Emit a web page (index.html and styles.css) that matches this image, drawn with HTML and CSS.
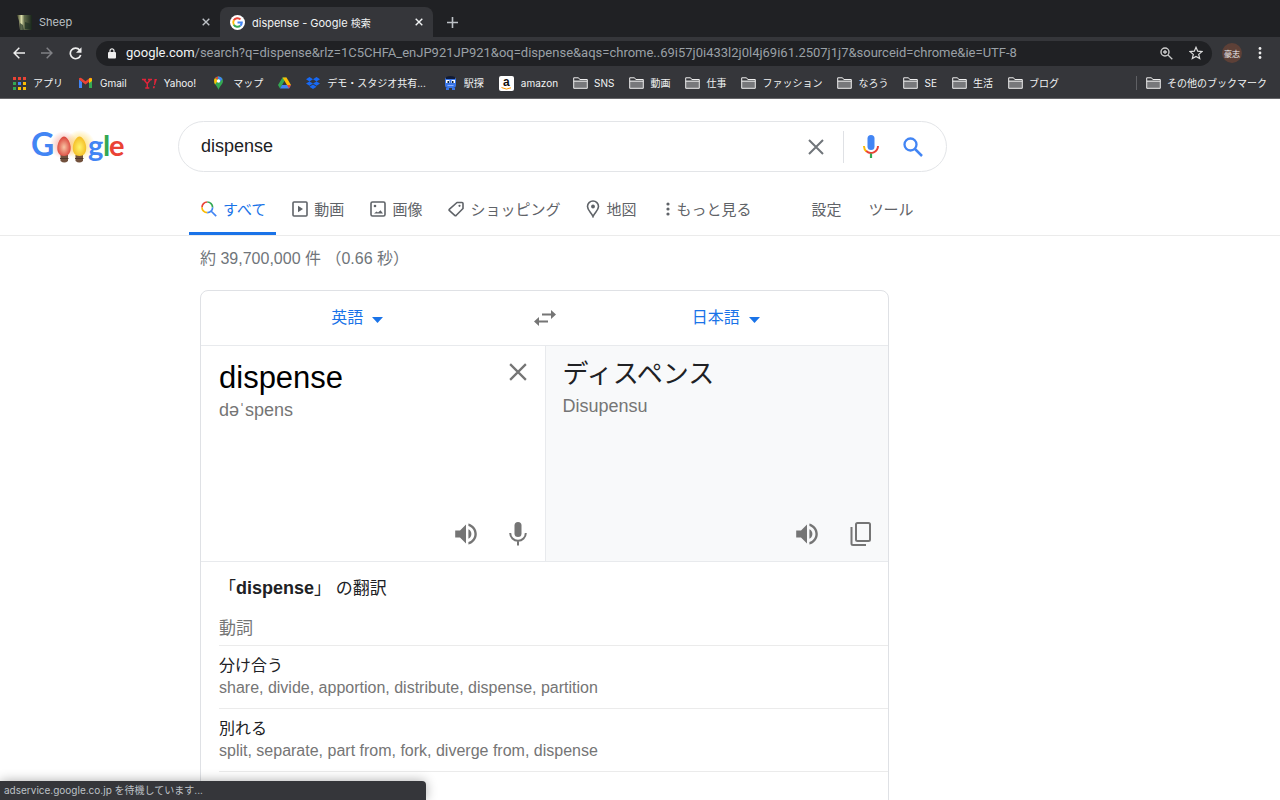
FILE: index.html
```html
<!DOCTYPE html>
<html lang="ja">
<head>
<meta charset="utf-8">
<title>dispense - Google 検索</title>
<link rel="stylesheet" href="styles.css">
</head>
<body>
<svg class="defs" aria-hidden="true">
  <symbol id="folder" viewBox="0 0 15 12"><path d="M1 3.5h13v7.8H1z" fill="#77787b"/><path d="M.7 11.3V.8h4.8l1.3 1.7h7.5v8.8zM.7 4.2h13.6" fill="none" stroke="#eee" stroke-width="1"/></symbol>
  <symbol id="cross" viewBox="0 0 16 16"><path d="M1 1l14 14M15 1L1 15" fill="none" stroke="currentColor" stroke-width="2"/></symbol>
  <symbol id="tabcross" viewBox="0 0 8 8"><path d="M.7.7l6.6 6.6M7.3.7L.7 7.3" fill="none" stroke="currentColor" stroke-width="1.4"/></symbol>
  <symbol id="speaker" viewBox="2 2 20 20"><path fill="currentColor" d="M3 9v6h4l5 5V4L7 9H3zm13.5 3A4.5 4.500 0 0 0 14 7.970v8.050c1.480-.730 2.500-2.250 2.500-4.020zM14 3.230v2.060c2.890.860 5 3.540 5 6.710s-2.110 5.850-5 6.710v2.060c4.010-.910 7-4.490 7-8.770s-2.990-7.860-7-8.770z"/></symbol>
  <symbol id="caret" viewBox="0 0 11 6"><path d="M0 0h11L5.500 6z" fill="currentColor"/></symbol>
</svg>

<header class="browser">
  <div class="tabs">
    <div class="tab">
      <svg width="15" height="15" viewBox="0 0 15 15"><defs><linearGradient id="sheep"><stop offset="0" stop-color="#35391f"/><stop offset=".3" stop-color="#d9dca8"/><stop offset=".5" stop-color="#5f6a4a"/><stop offset="1" stop-color="#18241a"/></linearGradient></defs><path fill="url(#sheep)" d="M0 0h15v15H3L2 6z"/><path d="M3 8l3 2 1 5H3zM8 7l6 2v5H8z" fill="#203024" opacity=".7"/></svg>
      <span class="tab-title">Sheep</span>
      <button class="tab-close" aria-label="タブを閉じる"><svg width="8" height="8"><use href="#tabcross"/></svg></button>
    </div>
    <div class="tab tab-active">
      <svg width="15" height="15" viewBox="0 0 15 15"><circle cx="7.500" cy="7.500" r="7.500" fill="#fff"/><g fill="none" stroke-width="2"><path d="M3.800 5.300a4.300 4.300 0 0 1 6.700-.900" stroke="#ea4335"/><path d="M3.800 9.700a4.300 4.300 0 0 1 0-4.400" stroke="#fbbc05"/><path d="M10.300 10.800a4.300 4.300 0 0 1-6.500-1.100" stroke="#34a853"/><path d="M7.500 7.600h4.300q0 2-1.500 3.200" stroke="#4285f4"/></g></svg>
      <span class="tab-title">dispense - Google <small>検索</small></span>
      <button class="tab-close" aria-label="タブを閉じる"><svg width="8" height="8"><use href="#tabcross"/></svg></button>
    </div>
    <button class="new-tab" aria-label="新しいタブ"><svg width="11" height="11" viewBox="0 0 11 11"><path d="M5.500 0v11M0 5.500h11" stroke="currentColor" stroke-width="1.600"/></svg></button>
  </div>
  <div class="toolbar">
    <button class="tool" aria-label="戻る"><svg width="12" height="12" viewBox="0 0 12 12"><path d="M12 6H1.200M6.300.8L1.100 6l5.200 5.200" fill="none" stroke="#eee" stroke-width="1.500"/></svg></button>
    <button class="tool" aria-label="進む"><svg width="12" height="12" viewBox="0 0 12 12"><path d="M0 6h10.800M5.700.8L10.900 6l-5.200 5.200" fill="none" stroke="#808185" stroke-width="1.500"/></svg></button>
    <button class="tool" aria-label="再読み込み"><svg width="13" height="13" viewBox="0 0 13 13"><path d="M10.700 3A5.300 5.300 0 1 0 11.700 8" fill="none" stroke="#eee" stroke-width="1.700"/><path d="M12.500.3v5.500H7z" fill="#eee"/></svg></button>
    <div class="omnibox">
      <svg width="8" height="11" viewBox="0 0 8 11"><rect y="4" width="8" height="6.500" rx="1" fill="#eee"/><path d="M2 5V2.800a2 2 0 0 1 4 0V5" fill="none" stroke="#eee" stroke-width="1.200"/></svg>
      <div class="url" role="textbox" aria-label="アドレスと検索バー"><b>google.com</b>/search?q=dispense&amp;rlz=1C5CHFA_enJP921JP921&amp;oq=dispense&amp;aqs=chrome..69i57j0i433l2j0l4j69i61.2507j1j7&amp;sourceid=chrome&amp;ie=UTF-8</div>
      <button class="plain" aria-label="ズーム"><svg width="13" height="13" viewBox="0 0 13 13"><circle cx="5" cy="5" r="4" fill="none" stroke="#ccc" stroke-width="1.400"/><path d="M8 8l4.300 4.300M5 3v4M3 5h4" stroke="#ccc" stroke-width="1.300"/></svg></button>
      <button class="plain" aria-label="ブックマークに追加"><svg width="14" height="14" viewBox="0 0 14 14"><path d="M7 1.300l1.700 3.900 4.200.4-3.200 2.800 1 4.200L7 10.400l-3.700 2.200 1-4.200-3.200-2.800 4.200-.4z" fill="none" stroke="#ddd" stroke-width="1.200"/></svg></button>
    </div>
    <button class="avatar" aria-label="プロフィール">豪志</button>
    <button class="plain" aria-label="メニュー"><svg width="4" height="12" viewBox="0 0 4 12"><g fill="#eee"><circle cx="2" cy="1.500" r="1.400"/><circle cx="2" cy="6" r="1.400"/><circle cx="2" cy="10.500" r="1.400"/></g></svg></button>
  </div>
  <nav class="bookmarks" aria-label="ブックマーク">
    <a href="#"><svg width="13" height="13" viewBox="0 0 13 13"><path d="M0 0h3v3H0zM5 0h3v3H5zM10 0h3v3h-3z" fill="#ea4335"/><path d="M0 5h3v3H0zM0 10h3v3H0z" fill="#34a853"/><path d="M5 5h3v3H5z" fill="#4285f4"/><path d="M10 5h3v3h-3zM10 10h3v3h-3zM5 10h3v3H5z" fill="#fbbc05"/></svg><span lang="ja">アプリ</span></a>
    <a href="#"><svg width="15" height="12" viewBox="0 0 15 12"><path d="M1 2v9h3V5z" fill="#4285f4"/><path d="M14 2v9h-3V5z" fill="#34a853"/><path d="M1 2.500l6.500 5 6.500-5V1.200q-1.500-1-3 .3L7.500 4.200 4 1.500Q2.500.2 1 1.200z" fill="#ea4335"/><path d="M11 1.500q2-1.200 3 .2V4l-3 2.300z" fill="#fbbc05"/></svg><span>Gmail</span></a>
    <a href="#"><svg width="15" height="11" viewBox="0 0 15 11"><path d="M0 1.500h4M6 1.500h4M1.800 1.500l3.400 4.200L8.500 1.500M5.300 5.500V9.800M3.300 10h4" fill="none" stroke="#e0243a" stroke-width="1.400"/><path d="M12.500 1H15l-2 6h-1zM11.200 8.300h1.700l-.4 1.900h-1.700z" fill="#e0243a"/></svg><span>Yahoo!</span></a>
    <a href="#"><svg width="15" height="14" viewBox="0 0 15 14"><path d="M7.500 14C6.500 10 3 8.500 3 5a4.500 4.500 0 0 1 9 0c0 3.500-3.500 5-4.500 9z" fill="#34a853"/><path d="M3.300 6.500A4.500 4.500 0 0 1 4 2l3 2.500-3 4z" fill="#fbbc05"/><path d="M4 2a4.500 4.500 0 0 1 3.500-1.500l-1 3z" fill="#ea4335"/><path d="M7 .5A4.500 4.500 0 0 1 11.500 3L8 7z" fill="#4285f4"/><circle cx="7.500" cy="5" r="1.700" fill="#fff"/></svg><span lang="ja">マップ</span></a>
    <a href="#" aria-label="ドライブ"><svg width="13" height="12" viewBox="0 0 13 12"><path d="M4.500.5h4L4 8l-2 3.500L0 8z" fill="#34a853"/><path d="M4.500.5h4L13 8H9z" fill="#fbbc05"/><path d="M4 8h9l-2 3.500H2z" fill="#4285f4"/><path d="M9 8h4l-2 3.500z" fill="#ea4335"/></svg></a>
    <a href="#"><svg width="14" height="12" viewBox="0 0 14 12"><path d="M3.500 0L7 2.200 3.500 4.400 0 2.200zM10.500 0L14 2.200l-3.500 2.200L7 2.200zM3.500 4.400L7 6.600 3.500 8.800 0 6.600zM10.500 4.400L14 6.600l-3.500 2.200L7 6.600zM7 7.500l3.500 2.200L7 12 3.500 9.700z" fill="#1769f5"/></svg><span lang="ja">デモ・スタジオ共有...</span></a>
    <a href="#" class="eki"><svg width="13" height="14" viewBox="0 0 13 14"><rect x="1" y="1" width="11" height="11" rx="3" fill="#3975e8"/><path d="M2 1Q6.500-1 11 1v2H2z" fill="#111b35"/><path d="M2 4h3.500v3H2zM7.500 4H11v3H7.500z" fill="#fff"/><path d="M3.500 5H5v2H3.500zM8 5h1.500v2H8z" fill="#123"/><path d="M3.500 9.500h6" stroke="#8fb4ff"/><path d="M2 13h3M8 13h3" stroke="#3975e8" stroke-width="2"/></svg><span lang="ja">駅探</span></a>
    <a href="#"><svg class="badge" width="15" height="15" viewBox="0 0 15 15"><rect width="15" height="15" rx="2" fill="#fff"/><text class="mark" x="4" y="10" font-size="12" fill="#111">a</text><path d="M2.500 11.500q5 3 9.500.3" fill="none" stroke="#f90"/></svg><span>amazon</span></a>
    <a class="dir" href="#"><svg width="15" height="12"><use href="#folder"/></svg><span>SNS</span></a>
    <a class="dir" href="#"><svg width="15" height="12"><use href="#folder"/></svg><span lang="ja">動画</span></a>
    <a class="dir" href="#"><svg width="15" height="12"><use href="#folder"/></svg><span lang="ja">仕事</span></a>
    <a class="dir" href="#"><svg width="15" height="12"><use href="#folder"/></svg><span lang="ja">ファッション</span></a>
    <a class="dir" href="#"><svg width="15" height="12"><use href="#folder"/></svg><span lang="ja">なろう</span></a>
    <a class="dir" href="#"><svg width="15" height="12"><use href="#folder"/></svg><span>SE</span></a>
    <a class="dir" href="#"><svg width="15" height="12"><use href="#folder"/></svg><span lang="ja">生活</span></a>
    <a class="dir" href="#"><svg width="15" height="12"><use href="#folder"/></svg><span lang="ja">ブログ</span></a>
    <a class="dir others" href="#"><svg width="15" height="12"><use href="#folder"/></svg><span lang="ja">その他のブックマーク</span></a>
  </nav>
</header>

<div class="page">
  <div class="searchrow">
    <a class="logo" href="#" aria-label="Google">
      <svg width="104" height="46" viewBox="0 0 104 46">
        <defs>
          <radialGradient id="glowR"><stop offset=".3" stop-color="#f0806f" stop-opacity=".5"/><stop offset="1" stop-color="#f0806f" stop-opacity="0"/></radialGradient>
          <radialGradient id="glowY"><stop offset=".3" stop-color="#ffd23c" stop-opacity=".6"/><stop offset="1" stop-color="#ffd23c" stop-opacity="0"/></radialGradient>
          <radialGradient id="bulbR" cy=".55"><stop offset="0" stop-color="#f8c6a4"/><stop offset="1" stop-color="#dc4b41"/></radialGradient>
          <radialGradient id="bulbY" cy=".55"><stop offset="0" stop-color="#fff36a"/><stop offset="1" stop-color="#f4bf28"/></radialGradient>
        </defs>
        <text class="letter" x="3" y="32" font-size="32" fill="#4285f4">G</text>
        <circle cx="36" cy="21" r="14" fill="url(#glowR)"/><circle cx="52" cy="21" r="15" fill="url(#glowY)"/>
        <path d="M32.500 31h7.500v6q-3.700 3-7.500 0zM47.500 31h7.500v6q-3.700 3-7.500 0z" fill="#71503c"/>
        <path d="M32 34.500h8.500M47 34.500h8.500" stroke="#4e382c"/>
        <path d="M36 12.500c3 0 6.700 6 6.700 11.500 0 4.500-2.200 8-6.700 8s-6.700-3.500-6.700-8c0-5.500 3.700-11.500 6.700-11.500z" fill="url(#bulbR)"/>
        <path d="M51.500 12.500c3 0 6.700 6 6.700 11.500 0 4.500-2.200 8-6.700 8s-6.700-3.500-6.700-8c0-5.500 3.700-11.500 6.700-11.500z" fill="url(#bulbY)"/>
        <text class="letter" x="60" y="32" font-size="29" fill="#4285f4">g</text>
        <text class="letter" x="75" y="32" font-size="29" fill="#34a853">l</text>
        <text class="letter" x="81" y="32" font-size="29" fill="#ea4335">e</text>
      </svg>
    </a>
    <form class="searchbox">
      <input type="text" value="dispense" aria-label="検索">
      <button type="button" class="plain clear" aria-label="クリア"><svg width="16" height="16"><use href="#cross"/></svg></button>
      <button type="button" class="plain" aria-label="音声で検索"><svg width="16" height="24" viewBox="0 0 16 24"><rect x="4.500" y="0" width="7" height="15" rx="3.500" fill="#4285f4"/><path d="M1 11a7 7 0 0 0 2.500 5.500" fill="none" stroke="#fbbc05" stroke-width="2"/><path d="M3.200 16A7 7 0 0 0 15 11" fill="none" stroke="#ea4335" stroke-width="2"/><path d="M8 18.500V23" stroke="#34a853" stroke-width="2.200"/></svg></button>
      <button type="button" class="plain" aria-label="Google 検索"><svg width="20" height="20" viewBox="0 0 20 20"><circle cx="7.500" cy="7.500" r="6" fill="none" stroke="#4285f4" stroke-width="2.300"/><path d="M12 12l7 7" stroke="#4285f4" stroke-width="2.500"/></svg></button>
    </form>
  </div>
  <nav class="modes" aria-label="検索の種類">
    <a class="current" href="#"><svg width="16" height="16" viewBox="0 0 16 16"><g fill="none" stroke-width="1.700"><path d="M1 6.500A5.300 5.300 0 0 1 6.300 1" stroke="#ea4335"/><path d="M6.300 11.700A5.300 5.300 0 0 1 1 6.400" stroke="#fbbc05"/><path d="M6.300 1a5.300 5.300 0 0 1 5.300 5.400" stroke="#34a853"/><path d="M11.600 6.400a5.300 5.300 0 0 1-5.300 5.300M10 10l5.200 5.200" stroke="#4285f4"/></g></svg>すべて</a>
    <a href="#"><svg width="16" height="16" viewBox="0 0 16 16"><rect x="1" y="1" width="14" height="14" rx="1" fill="none" stroke="currentColor" stroke-width="1.600"/><path d="M6 4.800v6.400L11 8z" fill="currentColor"/></svg>動画</a>
    <a href="#"><svg width="16" height="16" viewBox="0 0 16 16"><rect x="1" y="1" width="14" height="14" rx="1.500" fill="none" stroke="currentColor" stroke-width="1.600"/><circle cx="5" cy="5" r="1.300" fill="currentColor"/><path d="M4 12.500l2.500-2 1.500 1 2.500-2.300 2.500 3.300z" fill="currentColor"/></svg>画像</a>
    <a href="#"><svg width="16" height="16" viewBox="0 0 16 16"><path d="M9 1.500h5q1 0 1 1v5L8.300 14.300q-.8.700-1.600 0L1.500 9.700q-.8-.8 0-1.600z" fill="none" stroke="currentColor" stroke-width="1.600" stroke-linejoin="round"/><circle cx="11.500" cy="4.800" r="1.100" fill="currentColor"/></svg>ショッピング</a>
    <a href="#"><svg width="14" height="18" viewBox="0 0 14 18"><path d="M7 16.500C5.500 12.500 1.500 10.500 1.500 6.500a5.500 5.500 0 0 1 11 0C12.500 10.500 8.500 12.500 7 16.500z" fill="none" stroke="currentColor" stroke-width="1.600"/><circle cx="7" cy="6.500" r="1.900" fill="currentColor"/></svg>地図</a>
    <a class="more" href="#"><svg width="4" height="14" viewBox="0 0 4 14"><g fill="currentColor"><circle cx="2" cy="2" r="1.600"/><circle cx="2" cy="7" r="1.600"/><circle cx="2" cy="12" r="1.600"/></g></svg>もっと見る</a>
    <div class="settings"><a href="#">設定</a><a href="#">ツール</a></div>
  </nav>
  <main>
    <p class="stats">約 39,700,000 件 （0.66 秒）</p>
    <section class="translate">
      <div class="langs">
        <label class="lang"><select aria-label="翻訳元の言語"><option>英語</option></select><svg width="11" height="6"><use href="#caret"/></svg></label>
        <button class="plain swap" aria-label="言語を入れ替える"><svg width="22" height="16" viewBox="0 0 22 16"><path d="M8 4.500h9M14 11.500H5" fill="none" stroke="currentColor" stroke-width="2.200"/><path d="M17 0l5 4.500L17 9zM5 7L0 11.500 5 16z" fill="currentColor"/></svg></button>
        <label class="lang target"><select aria-label="翻訳先の言語"><option>日本語</option></select><svg width="11" height="6"><use href="#caret"/></svg></label>
      </div>
      <div class="panes">
        <div class="pane">
          <div class="entry"><textarea rows="1" aria-label="原文">dispense</textarea><button class="plain" aria-label="原文を消去"><svg width="18" height="18"><use href="#cross"/></svg></button></div>
          <p class="reading">dəˈspens</p>
          <div class="actions">
            <button class="plain" aria-label="聞く"><svg width="24" height="24"><use href="#speaker"/></svg></button>
            <button class="plain" aria-label="音声入力"><svg width="18" height="24" viewBox="0 0 18 24"><rect x="5.500" y="0" width="7" height="15" rx="3.500" fill="currentColor"/><path d="M1.200 11a7.800 7.800 0 0 0 15.600 0M9 19v4.500" fill="none" stroke="currentColor" stroke-width="2"/></svg></button>
          </div>
        </div>
        <div class="pane result">
          <p class="output">ディスペンス</p>
          <p class="reading">Disupensu</p>
          <div class="actions">
            <button class="plain" aria-label="聞く"><svg width="24" height="24"><use href="#speaker"/></svg></button>
            <button class="plain" aria-label="コピー"><svg width="22" height="24" viewBox="0 0 22 24"><rect x="6" y="1" width="14" height="18" rx="1.500" fill="none" stroke="currentColor" stroke-width="2"/><path d="M1.500 5v16.500q0 1.500 1.500 1.500h13" fill="none" stroke="currentColor" stroke-width="2"/></svg></button>
          </div>
        </div>
      </div>
      <div class="dictionary">
        <h2>「<b>dispense</b>」 の翻訳</h2>
        <h3>動詞</h3>
        <dl>
          <div><dt>分け合う</dt><dd>share, divide, apportion, distribute, dispense, partition</dd></div>
          <div><dt>別れる</dt><dd>split, separate, part from, fork, diverge from, dispense</dd></div>
          <div></div>
        </dl>
      </div>
    </section>
  </main>
</div>
<div class="status" role="status">adservice.google.co.jp <span lang="ja">を待機しています...</span></div>
</body>
</html>
```

FILE: styles.css
```css
* { box-sizing: border-box; }
body {
  margin: 0;
  height: 100vh;
  overflow: hidden;
  display: flex;
  flex-direction: column;
  background: #fff;
  color: #202124;
  font-family: "Liberation Sans", "Noto Sans CJK JP", sans-serif;
}
svg { flex: none; display: block; }
.defs { position: absolute; width: 0; height: 0; }
a { color: inherit; text-decoration: none; }
p, h2, h3, dl, dd { margin: 0; }
button, .plain {
  margin: 0;
  padding: 0;
  border: 0;
  background: none;
  color: inherit;
  font: inherit;
}

/* browser frame */
.browser {
  flex: none;
  background: #35363a;
  border-bottom: 1px solid #656568;
  color: #f1f3f4;
  font-family: Inter, "Noto Sans CJK JP", sans-serif;
  font-size: 11px;
}
.tabs { display: flex; height: 37px; padding: 7px 0 0 6px; background: #202124; }
.tab { display: flex; align-items: center; width: 214px; padding: 0 10px 0 11px; gap: 7px; color: #bdc1c6; white-space: nowrap; }
.tab-active { width: 213px; padding-left: 10px; border-radius: 8px 8px 0 0; background: #35363a; color: #f1f3f4; }
.tab small { font-size: 10px; }
.tab-close { margin-left: auto; }
.new-tab { margin-left: 14px; color: #bdc1c6; }
.toolbar { display: flex; align-items: center; height: 32px; padding: 0 18px 0 13px; gap: 16px; }
.omnibox {
  flex: 1;
  display: flex;
  align-items: center;
  min-width: 0;
  height: 25px;
  padding: 0 9px 0 12px;
  gap: 16px;
  border-radius: 13px;
  background: #202124;
}
.omnibox > svg { margin-right: -6px; }
.url { flex: 1; min-width: 0; overflow: hidden; white-space: nowrap; color: #9aa0a6; font-family: Roboto, sans-serif; font-size: 13px; line-height: 20px; }
.url b { color: #f1f3f4; font-weight: 400; }
.tool + .omnibox { margin-left: -2px; }
.avatar { width: 20px; height: 20px; margin-left: -6px; border-radius: 50%; background: #5d4037; font-size: 8px; white-space: nowrap; }
.bookmarks { display: flex; align-items: center; height: 29px; padding: 0 13px 1px; gap: 15px; white-space: nowrap; }
.bookmarks a { display: flex; align-items: center; gap: 7px; line-height: 14px; }
.bookmarks .dir { gap: 6px; }
.bookmarks span:lang(ja), .status span { font-size: 10px; }
.bookmarks .eki { margin-left: 3px; }
.bookmarks .others { margin-left: auto; padding-left: 9px; border-left: 1px solid #5f6064; }
.badge { overflow: visible; }
.mark { font-family: "Liberation Sans", sans-serif; font-weight: 700; }

/* search header */
.page { flex: 1; min-height: 0; overflow: hidden; }
.searchrow { display: flex; align-items: center; padding-top: 22px; }
.logo { width: 178px; padding-left: 28px; }
.letter { font-family: Lato, sans-serif; font-weight: 700; }
.searchbox {
  flex: 0 1 769px;
  display: flex;
  align-items: center;
  height: 51px;
  padding: 0 23px 0 22px;
  gap: 24px;
  border: 1px solid #e3e5e8;
  border-radius: 26px;
}
.searchbox input { flex: 1; min-width: 0; padding: 0; border: 0; outline: 0; color: #202124; font: 18px "Liberation Sans", sans-serif; }
.searchbox .clear { display: flex; align-items: center; height: 32px; padding-right: 19px; margin-right: -5px; border-right: 1px solid #dfe1e5; color: #70757a; }
.modes { display: flex; height: 64px; padding: 13px 0 0 189px; gap: 4px; border-bottom: 1px solid #ebebeb; color: #5f6368; font-size: 15px; white-space: nowrap; }
.modes > a { display: flex; align-items: center; padding: 0 10px 3px 12px; gap: 6px; }
.modes > .current { padding-bottom: 0; border-bottom: 3px solid #1a73e8; color: #1a73e8; }
.modes > .more { margin-left: 4px; }
.settings { display: flex; align-items: center; gap: 27px; margin-left: 46px; padding-bottom: 3px; }

/* results */
main { max-width: 689px; margin-left: 200px; }
.stats { padding: 11px 0 19px; color: #70757a; font-size: 16px; line-height: 24px; }
.translate { border: 1px solid #dfe1e5; border-radius: 8px 8px 0 0; }
.langs { display: grid; grid-template-columns: 1fr auto 1fr; align-items: center; height: 54px; color: #757575; }
.swap { margin: 0 20px; }
.lang { display: flex; align-items: center; justify-content: center; gap: 8px; padding-bottom: 4px; color: #1a73e8; }
.target { padding-right: 12px; }
.lang svg { margin-top: 8px; }
.lang select { appearance: none; padding: 0; border: 0; background: none; color: inherit; font: 16px "Noto Sans CJK JP", sans-serif; }
.panes { display: grid; grid-template-columns: minmax(0, 1fr) minmax(0, 1fr); border: solid #e8eaed; border-width: 1px 0; }
.pane { display: flex; flex-direction: column; min-height: 215px; padding: 12px 18px 15px 18px; color: #757575; }
.result { border-left: 1px solid #e8eaed; background: #f8f9fa; padding: 8px 16px 15px 17px; }
.entry { display: flex; align-items: flex-start; }
.entry textarea { flex: 1; min-width: 0; height: 40px; padding: 0; border: 0; outline: 0; resize: none; overflow: hidden; color: #000; font: 31px/40px "Liberation Sans", sans-serif; }
.entry button { margin-top: 5px; }
.output { color: #202124; font-size: 26px; line-height: 40px; }
.reading { font-size: 18px; line-height: 24px; }
.actions { display: flex; justify-content: flex-end; align-items: center; gap: 31px; margin-top: auto; }
.dictionary { padding-left: 18px; }
h2 { padding-top: 13px; font-size: 17px; font-weight: 400; line-height: 26px; }
h2 b { font-size: 18px; }
h3 { padding: 15px 0 4px; color: #757575; font-size: 17px; font-weight: 400; line-height: 24px; }
dl > div { min-height: 63px; padding: 9px 0 9px; border-top: 1px solid #ebebeb; font-size: 16px; line-height: 22px; }
dd { color: #757575; }

/* link status bubble over the page */
.status {
  position: absolute;
  left: 0;
  bottom: 0;
  width: 426px;
  height: 19px;
  padding-left: 4px;
  border-radius: 0 4px 0 0;
  background: #35363a;
  box-shadow: 0 0 12px #0005;
  color: #bdc1c6;
  font: 10px/19px Inter, "Noto Sans CJK JP", sans-serif;
}
```
